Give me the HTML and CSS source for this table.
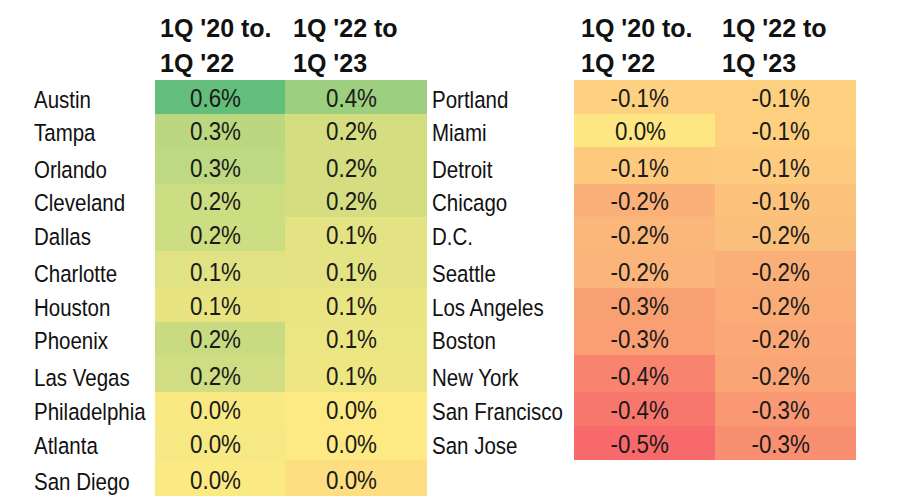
FILE: index.html
```html
<!DOCTYPE html>
<html>
<head>
<meta charset="utf-8">
<link rel="stylesheet" href="styles.css">
</head>
<body>
<div class="sheet">
  <div class="corner"></div>
  <div class="hd hd-a">1Q '20 to.<br>1Q '22</div>
  <div class="hd hd-b">1Q '22 to<br>1Q '23</div>
  <div class="corner"></div>
  <div class="hd">1Q '20 to.<br>1Q '22</div>
  <div class="hd">1Q '22 to<br>1Q '23</div>

  <div class="lbl"><span>Austin</span></div><div class="val" style="background:#63be7b"><span>0.6%</span></div><div class="val" style="background:#9ccf7f"><span>0.4%</span></div>
  <div class="lbl lbl-r"><span>Portland</span></div><div class="val" style="background:#fdd17f"><span>-0.1%</span></div><div class="val" style="background:#fdd07f"><span>-0.1%</span></div>

  <div class="lbl"><span>Tampa</span></div><div class="val" style="background:#bbd880"><span>0.3%</span></div><div class="val" style="background:#d4de81"><span>0.2%</span></div>
  <div class="lbl lbl-r"><span>Miami</span></div><div class="val" style="background:#fee683"><span>0.0%</span></div><div class="val" style="background:#fdcf7f"><span>-0.1%</span></div>

  <div class="lbl"><span>Orlando</span></div><div class="val" style="background:#bdd981"><span>0.3%</span></div><div class="val" style="background:#d4de81"><span>0.2%</span></div>
  <div class="lbl lbl-r"><span>Detroit</span></div><div class="val" style="background:#fdc97d"><span>-0.1%</span></div><div class="val" style="background:#fdcb7e"><span>-0.1%</span></div>

  <div class="lbl"><span>Cleveland</span></div><div class="val" style="background:#cddd81"><span>0.2%</span></div><div class="val" style="background:#d4de81"><span>0.2%</span></div>
  <div class="lbl lbl-r"><span>Chicago</span></div><div class="val" style="background:#fbb079"><span>-0.2%</span></div><div class="val" style="background:#fcc27c"><span>-0.1%</span></div>

  <div class="lbl"><span>Dallas</span></div><div class="val" style="background:#cddd81"><span>0.2%</span></div><div class="val" style="background:#e3e383"><span>0.1%</span></div>
  <div class="lbl lbl-r"><span>D.C.</span></div><div class="val" style="background:#fbb67a"><span>-0.2%</span></div><div class="val" style="background:#fbbf7c"><span>-0.2%</span></div>

  <div class="lbl"><span>Charlotte</span></div><div class="val" style="background:#e0e283"><span>0.1%</span></div><div class="val" style="background:#e3e383"><span>0.1%</span></div>
  <div class="lbl lbl-r"><span>Seattle</span></div><div class="val" style="background:#fbb57a"><span>-0.2%</span></div><div class="val" style="background:#faae78"><span>-0.2%</span></div>

  <div class="lbl"><span>Houston</span></div><div class="val" style="background:#e8e482"><span>0.1%</span></div><div class="val" style="background:#eae583"><span>0.1%</span></div>
  <div class="lbl lbl-r"><span>Los Angeles</span></div><div class="val" style="background:#f9a073"><span>-0.3%</span></div><div class="val" style="background:#faac77"><span>-0.2%</span></div>

  <div class="lbl"><span>Phoenix</span></div><div class="val" style="background:#c9db81"><span>0.2%</span></div><div class="val" style="background:#ece583"><span>0.1%</span></div>
  <div class="lbl lbl-r"><span>Boston</span></div><div class="val" style="background:#fa9e74"><span>-0.3%</span></div><div class="val" style="background:#faa876"><span>-0.2%</span></div>

  <div class="lbl"><span>Las Vegas</span></div><div class="val" style="background:#d0dd82"><span>0.2%</span></div><div class="val" style="background:#eee683"><span>0.1%</span></div>
  <div class="lbl lbl-r"><span>New York</span></div><div class="val" style="background:#f8836f"><span>-0.4%</span></div><div class="val" style="background:#faa576"><span>-0.2%</span></div>

  <div class="lbl"><span>Philadelphia</span></div><div class="val" style="background:#f8e983"><span>0.0%</span></div><div class="val" style="background:#fdea84"><span>0.0%</span></div>
  <div class="lbl lbl-r"><span>San Francisco</span></div><div class="val" style="background:#f8776d"><span>-0.4%</span></div><div class="val" style="background:#f99873"><span>-0.3%</span></div>

  <div class="lbl"><span>Atlanta</span></div><div class="val" style="background:#f6e883"><span>0.0%</span></div><div class="val" style="background:#fdea84"><span>0.0%</span></div>
  <div class="lbl lbl-r"><span>San Jose</span></div><div class="val" style="background:#f8696b"><span>-0.5%</span></div><div class="val" style="background:#f98f71"><span>-0.3%</span></div>

  <div class="lbl"><span>San Diego</span></div><div class="val" style="background:#fbe983"><span>0.0%</span></div><div class="val" style="background:#fdde80"><span>0.0%</span></div>
  <div class="empty"></div><div class="empty"></div><div class="empty"></div>
</div>
</body>
</html>
```

FILE: styles.css
```css
html, body {
  margin: 0;
  padding: 0;
  background: #ffffff;
}

.sheet {
  display: grid;
  grid-template-columns: 121px 130px 142px 147px 141px 141px;
  grid-template-rows: 80px 34px 33px 37px 33px 34px 37px 34px 33px 37px 34px 34px 36px;
  padding-left: 34px;
  color: #111111;
  font-family: "Liberation Sans", Arial, sans-serif;
}

.hd {
  font-weight: bold;
  font-size: 25px;
  line-height: 35px;
  padding: 11px 0 0 7px;
  white-space: nowrap;
}

.hd-a {
  padding-left: 5px;
}

.hd-b {
  padding-left: 8px;
}

.lbl {
  font-size: 23.7px;
  line-height: 1;
  display: flex;
  align-items: flex-end;
  padding-bottom: 1.5px;
  white-space: nowrap;
}

.lbl span {
  display: inline-block;
  transform: scaleX(0.865);
  transform-origin: left bottom;
}

.lbl-r {
  padding-left: 5px;
}

.val {
  font-size: 25px;
  line-height: 1;
  display: flex;
  align-items: flex-end;
  justify-content: center;
  padding: 0 9px 3px 0;
  color: #1a1a1a;
}

.val span {
  display: inline-block;
  transform: scaleX(0.895);
  transform-origin: center bottom;
}
```
